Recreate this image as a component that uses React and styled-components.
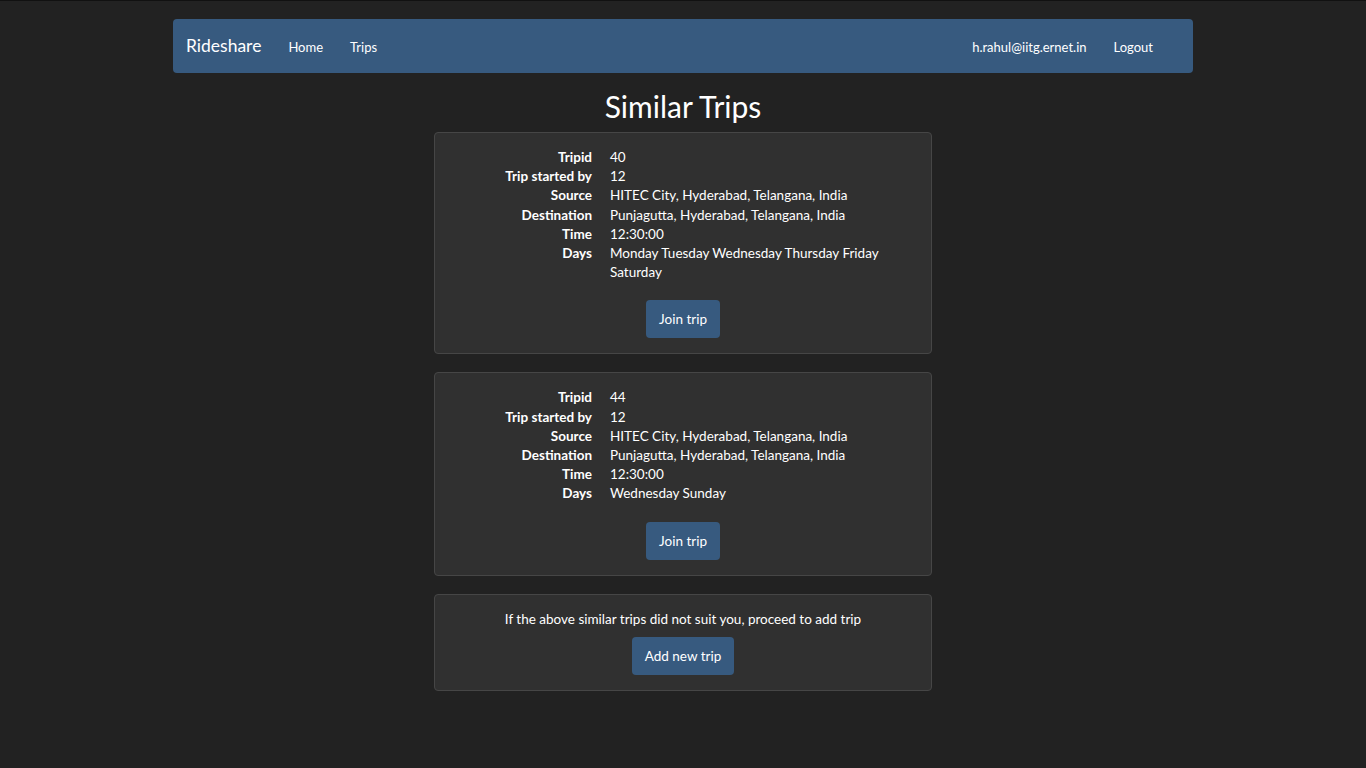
import React from "react";
import styled, { createGlobalStyle } from "styled-components";

const trips = [
  {
    id: 40,
    startedBy: 12,
    source: "HITEC City, Hyderabad, Telangana, India",
    destination: "Punjagutta, Hyderabad, Telangana, India",
    time: "12:30:00",
    days: "Monday Tuesday Wednesday Thursday Friday Saturday",
  },
  {
    id: 44,
    startedBy: 12,
    source: "HITEC City, Hyderabad, Telangana, India",
    destination: "Punjagutta, Hyderabad, Telangana, India",
    time: "12:30:00",
    days: "Wednesday Sunday",
  },
];

const App = () => {
  return (
    <>
      <GlobalStyle />
      <Page>
        <Navbar>
          <NavLeft>
            <Brand href="#">Rideshare</Brand>
            <NavLink href="#">Home</NavLink>
            <NavLink href="#">Trips</NavLink>
          </NavLeft>
          <NavRight>
            <NavLink href="#">h.rahul@iitg.ernet.in</NavLink>
            <NavLink href="#">Logout</NavLink>
          </NavRight>
        </Navbar>
        <Title>Similar Trips</Title>
        <Column>
          {trips.map((t) => (
            <Well key={t.id}>
              <Details>
                <Label>Tripid</Label>
                <Value>{t.id}</Value>
                <Label>Trip started by</Label>
                <Value>{t.startedBy}</Value>
                <Label>Source</Label>
                <Value>{t.source}</Value>
                <Label>Destination</Label>
                <Value>{t.destination}</Value>
                <Label>Time</Label>
                <Value>{t.time}</Value>
                <Label>Days</Label>
                <Value>{t.days}</Value>
              </Details>
              <Button $top={18}>Join trip</Button>
            </Well>
          ))}
          <Well>
            <Note>If the above similar trips did not suit you, proceed to add trip</Note>
            <Button $top={8}>Add new trip</Button>
          </Well>
        </Column>
      </Page>
    </>
  );
};

const GlobalStyle = createGlobalStyle`
  html, body {
    margin: 0;
    padding: 0;
    background: #222222;
  }
  body {
    border-top: 1px solid #111;
    font-family: Lato, "Open Sans", sans-serif;
    font-size: 13.5px;
    color: #ffffff;
  }
  * { box-sizing: border-box; }
`;

const Page = styled.div`
  width: 1020px;
  margin: 0 auto;
  padding-top: 18px;
  padding-bottom: 40px;
`;

const Navbar = styled.nav`
  height: 54px;
  background: #375a7f;
  border-radius: 4px;
  display: flex;
  align-items: center;
  justify-content: space-between;
  padding: 0 40px 0 13px;
`;

const NavLeft = styled.div`
  display: flex;
  align-items: center;
  gap: 27px;
`;

const NavRight = styled.div`
  display: flex;
  align-items: center;
  gap: 27px;
`;

const Brand = styled.a`
  font-size: 17.5px;
  color: #fff;
  text-decoration: none;
  padding-bottom: 2px;
`;

const NavLink = styled.a`
  font-size: 13px;
  color: #fff;
  text-decoration: none;
  padding-top: 1px;
`;

const Title = styled.h1`
  margin: 16px 0 9px;
  text-align: center;
  font-size: 30px;
  font-weight: 400;
  line-height: 34px;
`;

const Column = styled.div`
  width: 498px;
  margin: 0 auto;
  display: flex;
  flex-direction: column;
  gap: 18px;
`;

const Well = styled.div`
  background: #303030;
  border: 1px solid #464646;
  border-radius: 4px;
  padding: 15px 19px 15px;
  display: flex;
  flex-direction: column;
  align-items: center;
`;

const Details = styled.div`
  align-self: stretch;
  display: grid;
  grid-template-columns: 138px 1fr;
  column-gap: 18px;
  line-height: 19.2px;
`;

const Label = styled.div`
  text-align: right;
  font-weight: 700;
`;

const Value = styled.div``;

const Note = styled.div`
  line-height: 19px;
`;

const Button = styled.button`
  margin-top: ${(p) => p.$top}px;
  height: 38px;
  padding: 0 13px;
  background: #375a7f;
  border: none;
  border-radius: 4px;
  color: #fff;
  font-family: inherit;
  font-size: 13.5px;
`;

export default App;
